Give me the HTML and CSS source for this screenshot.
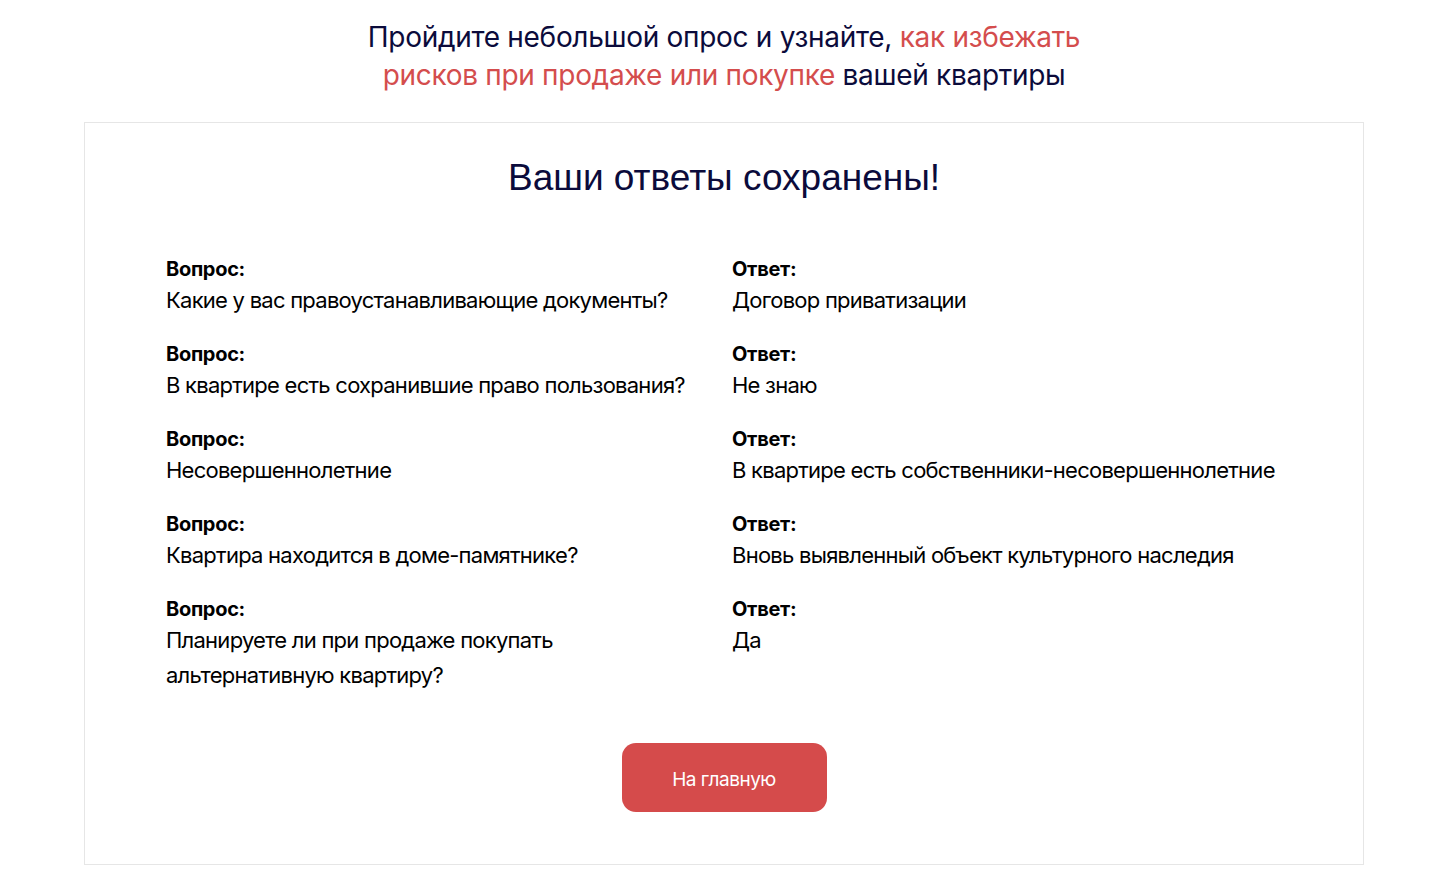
FILE: index.html
```html
<!DOCTYPE html>
<html lang="ru">
<head>
<meta charset="utf-8">
<link rel="stylesheet" href="styles.css">
</head>
<body>
<div class="page">
  <h1 class="lead">Пройдите небольшой опрос и узнайте, <span class="accent">как избежать<br>рисков при продаже или покупке</span> вашей квартиры</h1>
  <section class="card">
    <h2 class="title">Ваши ответы сохранены!</h2>
    <div class="grid">
      <div class="item"><div class="label">Вопрос:</div><div class="text">Какие у вас правоустанавливающие документы?</div></div>
      <div class="item"><div class="label">Ответ:</div><div class="text">Договор приватизации</div></div>
      <div class="item"><div class="label">Вопрос:</div><div class="text">В квартире есть сохранившие право пользования?</div></div>
      <div class="item"><div class="label">Ответ:</div><div class="text">Не знаю</div></div>
      <div class="item"><div class="label">Вопрос:</div><div class="text">Несовершеннолетние</div></div>
      <div class="item"><div class="label">Ответ:</div><div class="text">В квартире есть собственники-несовершеннолетние</div></div>
      <div class="item"><div class="label">Вопрос:</div><div class="text">Квартира находится в доме-памятнике?</div></div>
      <div class="item"><div class="label">Ответ:</div><div class="text">Вновь выявленный объект культурного наследия</div></div>
      <div class="item"><div class="label">Вопрос:</div><div class="text narrow">Планируете ли при продаже покупать альтернативную квартиру?</div></div>
      <div class="item"><div class="label">Ответ:</div><div class="text">Да</div></div>
    </div>
    <div class="actions"><a class="btn" href="#">На главную</a></div>
  </section>
</div>
</body>
</html>
```
FILE: styles.css
```css
* { box-sizing: border-box; }
html, body { margin: 0; padding: 0; background: #fff; }
body { font-family: Inter, "Liberation Sans", sans-serif; color: #000; }
.page { width: 1280px; margin-left: 84px; padding-top: 18px; }
.lead {
  margin: 0;
  text-align: center;
  font-weight: 400;
  font-size: 28px;
  line-height: 38px;
  letter-spacing: -0.3px;
  color: #0b0b3b;
}
.accent { color: #d44d4d; }
.card {
  margin-top: 28px;
  border: 1px solid #e6e6e6;
  height: 743px;
  padding: 0 81px;
}
.title {
  margin: 33px 0 0;
  text-align: center;
  font-family: "Liberation Sans", Arial, sans-serif;
  font-weight: 400;
  font-size: 37px;
  line-height: 44px;
  color: #0b0b3b;
}
.grid {
  margin-top: 56px;
  display: grid;
  grid-template-columns: 566px 1fr;
  row-gap: 23px;
}
.label {
  font-weight: 700;
  font-size: 20px;
  line-height: 26px;
  letter-spacing: -0.3px;
}
.text {
  font-size: 22px;
  line-height: 35px;
  letter-spacing: -0.75px;
  margin-top: 1px;
}
.narrow { max-width: 420px; }
.actions { display: flex; justify-content: center; margin-top: 50px; }
.btn {
  display: flex;
  align-items: center;
  justify-content: center;
  width: 205px;
  height: 69px;
  padding-top: 3px;
  border-radius: 14px;
  background: #d54b4b;
  color: #fff;
  text-decoration: none;
  font-size: 19px;
  letter-spacing: -0.5px;
}
```
